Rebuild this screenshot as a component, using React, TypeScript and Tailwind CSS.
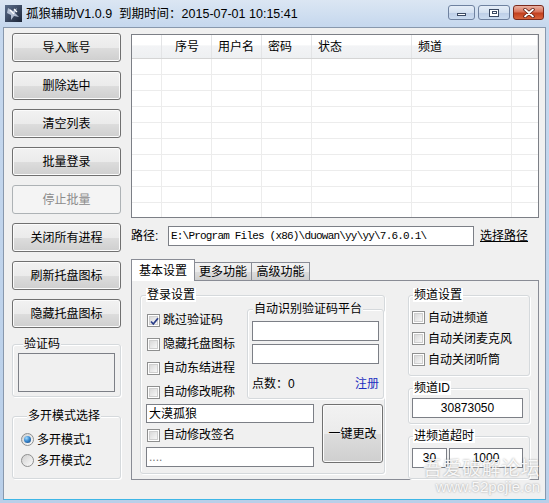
import type { ReactNode } from 'react';

const UI = "font-['Liberation_Sans','Noto_Sans_CJK_SC',sans-serif]";

function Btn({ children, disabled, className = '' }: { children: ReactNode; disabled?: boolean; className?: string }) {
  return (
    <div
      className={`flex items-center justify-center rounded-[3px] border text-[12px] ${
        disabled
          ? 'border-[#adb2b5] bg-[#f4f4f4] text-[#8b8b8b]'
          : 'border-[#707070] bg-[linear-gradient(to_bottom,#f2f2f2_0%,#ebebeb_50%,#dddddd_51%,#cfcfcf_100%)] text-black shadow-[inset_0_0_0_1px_#fbfbfb]'
      } ${className}`}
    >
      {children}
    </div>
  );
}

function Check({ checked, label }: { checked?: boolean; label: string }) {
  return (
    <div className="flex items-center gap-[3px]">
      <span className="relative flex h-[13px] w-[13px] shrink-0 items-center justify-center border border-[#8e8f8f] bg-white">
        <span className="h-[9px] w-[9px] border border-[#cfcfcf] bg-[linear-gradient(135deg,#d9d9d9,#f7f7f7)]" />
        {checked && (
          <svg className="absolute left-[1px] top-[1px]" width="11" height="11" viewBox="0 0 11 11">
            <path d="M2 5.5 L4.3 8 L9 2.3" fill="none" stroke="#2c3f8a" strokeWidth="1.8" />
          </svg>
        )}
      </span>
      <span className="text-[12px] leading-[14px]">{label}</span>
    </div>
  );
}

function Radio({ checked, label }: { checked?: boolean; label: string }) {
  return (
    <div className="flex items-center gap-[3px]">
      <span className="flex h-[13px] w-[13px] shrink-0 items-center justify-center rounded-full border border-[#8e8f8f] bg-[linear-gradient(135deg,#d0d0d0,#fbfbfb)]">
        {checked && (
          <span className="h-[7px] w-[7px] rounded-full bg-[radial-gradient(circle_at_35%_30%,#a5dcff_0%,#3a8ad0_45%,#123f7a_100%)]" />
        )}
      </span>
      <span className="text-[12px] leading-[14px]">{label}</span>
    </div>
  );
}

function Group({
  title,
  white,
  className = '',
  legendClass = 'ml-[5px]',
  children,
}: {
  title: string;
  white?: boolean;
  className?: string;
  legendClass?: string;
  children: ReactNode;
}) {
  return (
    <fieldset className={`rounded-[3px] border border-[#d5d9dc] shadow-[inset_1px_1px_0_#ffffff,1px_1px_0_#ffffff] ${className}`}>
      <legend className={`px-[1px] text-[12px] leading-[14px] ${white ? 'bg-white' : 'bg-[#f0f0f0]'} ${legendClass}`}>
        {title}
      </legend>
      {children}
    </fieldset>
  );
}

function TextBox({ value, className = '', mono, center }: { value?: string; className?: string; mono?: boolean; center?: boolean }) {
  return (
    <div
      className={`flex items-center border border-[#7c7f86] bg-white px-[2px] ${
        mono ? "font-['Liberation_Mono',monospace] text-[11px] tracking-[-0.8px]" : 'text-[12px]'
      } ${center ? 'justify-center' : ''} ${className}`}
    >
      <span className="whitespace-nowrap">{value}</span>
    </div>
  );
}

function TitleButtons() {
  return (
    <div className="flex items-start gap-[3px] pt-[5px]">
      <div className="flex h-[15px] w-[27px] items-center justify-center rounded-[3px] border border-[#6f82a0] bg-[linear-gradient(to_bottom,#e6eef8_0%,#d3e0f0_50%,#bccde6_51%,#cbdcf0_100%)]">
        <span className="mt-[4px] h-[3px] w-[9px] border border-[#3b4a63] bg-white" />
      </div>
      <div className="flex h-[15px] w-[32px] items-center justify-center rounded-[3px] border border-[#6f82a0] bg-[linear-gradient(to_bottom,#e6eef8_0%,#d3e0f0_50%,#bccde6_51%,#cbdcf0_100%)]">
        <span className="flex h-[8px] w-[10px] items-center justify-center border border-[#3b4a63] bg-white">
          <span className="h-[3px] w-[5px] border border-[#3b4a63]" />
        </span>
      </div>
      <div className="flex h-[15px] w-[31px] items-center justify-center rounded-[3px] border border-[#7a2a1d] bg-[linear-gradient(to_bottom,#eab3a4_0%,#d9735a_45%,#c2401f_55%,#d9643c_100%)]">
        <svg width="12" height="10" viewBox="0 0 12 10">
          <path d="M2 1.5 L10 8.5 M10 1.5 L2 8.5" stroke="#5a1a10" strokeWidth="3.4" strokeLinecap="round" />
          <path d="M2 1.5 L10 8.5 M10 1.5 L2 8.5" stroke="#ffffff" strokeWidth="1.8" strokeLinecap="round" />
        </svg>
      </div>
    </div>
  );
}

const cols = [
  { w: 'w-[30px]', t: '', pl: '' },
  { w: 'w-[50px]', t: '序号', pl: 'pl-[13px]' },
  { w: 'w-[50px]', t: '用户名', pl: 'pl-[6px]' },
  { w: 'w-[50px]', t: '密码', pl: 'pl-[6px]' },
  { w: 'w-[100px]', t: '状态', pl: 'pl-[6px]' },
  { w: 'w-[100px]', t: '频道', pl: 'pl-[6px]' },
];

function ListView() {
  return (
    <div className="flex h-[184px] flex-col overflow-hidden border border-[#7c7f86] bg-white">
      <div className="flex h-[24px] shrink-0 border-b border-[#d5d5d5] bg-[linear-gradient(to_bottom,#ffffff_0%,#ffffff_45%,#f3f4f6_46%,#eef0f2_100%)]">
        {cols.map((c, i) => (
          <div key={i} className={`flex items-center border-r border-[#e3e4e6] text-[12px] ${c.w} ${c.pl}`}>
            {c.t}
          </div>
        ))}
        <div className="flex-1 border-r border-[#e3e4e6]" />
      </div>
      {Array.from({ length: 10 }).map((_, r) => (
        <div key={r} className="flex h-[16px] shrink-0 border-b border-[#ececec]">
          {cols.map((c, i) => (
            <div key={i} className={`border-r border-[#ececec] ${c.w}`} />
          ))}
          <div className="flex-1" />
        </div>
      ))}
    </div>
  );
}

export default function App() {
  return (
    <div className={`relative flex h-[503px] w-[549px] flex-col overflow-hidden bg-[linear-gradient(to_bottom,#dbe6f3_0px,#c6d8ee_26px,#b9cfe9_100%)] px-[3px] pb-[3px] text-black ${UI}`}>
      {/* title bar */}
      <div className="flex h-[27px] shrink-0 items-start justify-between pr-[2px]">
        <div className="flex items-center gap-[4px] pl-[2px] pt-[5px]">
          <svg width="17" height="17" viewBox="0 0 17 17">
            <defs>
              <linearGradient id="ic" x1="0" y1="0" x2="1" y2="1">
                <stop offset="0" stopColor="#5b6e8c" />
                <stop offset="1" stopColor="#1c2538" />
              </linearGradient>
            </defs>
            <rect x="0" y="0" width="17" height="17" fill="url(#ic)" />
            <path d="M3 3 L8 6 L12 3 L10 8 L14 12 L9 11 L6 15 L6 10 L2 8 Z" fill="#c9d4e6" opacity="0.85" />
            <path d="M5 5 L9 9 M9 4 L12 7" stroke="#ffffff" strokeWidth="1.2" />
          </svg>
          <span className="text-[12.5px] leading-[16px] text-black">孤狼辅助V1.0.9&nbsp;&nbsp;到期时间：2015-07-01 10:15:41</span>
        </div>
        <TitleButtons />
      </div>

      {/* client area */}
      <div className="flex min-h-0 flex-1 border border-[#8898ad] border-b-[#3fb6e6] bg-[#f0f0f0]">
        {/* left column */}
        <div className="flex w-[117px] shrink-0 flex-col pl-[8px] pt-[5px]">
          <div className="flex flex-col gap-[9px]">
            <Btn className="h-[29px]">导入账号</Btn>
            <Btn className="h-[29px]">删除选中</Btn>
            <Btn className="h-[29px]">清空列表</Btn>
            <Btn className="h-[29px]">批量登录</Btn>
            <Btn className="h-[29px]" disabled>停止批量</Btn>
            <Btn className="h-[29px]">关闭所有进程</Btn>
            <Btn className="h-[29px]">刷新托盘图标</Btn>
            <Btn className="h-[29px]">隐藏托盘图标</Btn>
          </div>
          <Group title="验证码" className="mt-[9px] h-[60px] px-[5px]" legendClass="ml-[5px]">
            <div className="mt-[2px] h-[39px] border border-[#7c7f86] bg-[#f0f0f0]" />
          </Group>
          <Group title="多开模式选择" className="mt-[12px] h-[70px] pl-[8px] pt-[6px]" legendClass="ml-[6px]">
            <div className="flex h-[21px] items-center">
              <Radio checked label="多开模式1" />
            </div>
            <div className="flex h-[21px] items-center">
              <Radio label="多开模式2" />
            </div>
          </Group>
        </div>

        {/* right column */}
        <div className="ml-[10px] flex w-[408px] shrink-0 flex-col pt-[6px]">
          <ListView />

          <div className="mt-[8px] flex h-[20px] items-center">
            <span className="w-[37px] text-[12px]">路径:</span>
            <TextBox mono value="E:\Program Files (x86)\duowan\yy\yy\7.6.0.1\" className="h-[20px] w-[306px]" />
            <span className="ml-[6px] text-[12px] underline">选择路径</span>
          </div>

          {/* tabs */}
          <div className="mt-[13px] flex h-[21px] items-end">
            <div className="relative z-10 -mb-px flex h-[22px] w-[64px] items-center justify-center border border-b-0 border-[#898c95] bg-white text-[12px]">
              基本设置
            </div>
            <div className="flex h-[18px] w-[57px] items-center justify-center border border-l-0 border-b-0 border-[#898c95] bg-[linear-gradient(to_bottom,#f2f2f2_0%,#ebebeb_50%,#dddddd_51%,#cfcfcf_100%)] text-[12px]">
              更多功能
            </div>
            <div className="flex h-[18px] w-[58px] items-center justify-center border border-l-0 border-b-0 border-[#898c95] bg-[linear-gradient(to_bottom,#f2f2f2_0%,#ebebeb_50%,#dddddd_51%,#cfcfcf_100%)] text-[12px]">
              高级功能
            </div>
          </div>
          <div className="flex h-[200px] border border-[#898c95] bg-[#f0f0f0] pl-[8px] pt-[7px]">
            {/* login settings */}
            <Group title="登录设置" white className="h-[186px] w-[245px]" legendClass="ml-[5px]">
              <div className="flex">
                <div className="flex w-[106px] flex-col pl-[6px] pt-[6px]">
                  <div className="flex h-[24px] items-center"><Check checked label="跳过验证码" /></div>
                  <div className="flex h-[24px] items-center"><Check label="隐藏托盘图标" /></div>
                  <div className="flex h-[24px] items-center"><Check label="自动东结进程" /></div>
                  <div className="flex h-[24px] items-center"><Check label="自动修改昵称" /></div>
                </div>
                <Group title="自动识别验证码平台" className="h-[97px] w-[137px] pl-[4px]" legendClass="ml-[1px]">
                  <TextBox className="mt-[5px] h-[20px] w-[127px]" />
                  <TextBox className="mt-[3px] h-[20px] w-[127px]" />
                  <div className="mt-[10px] flex h-[20px] w-[127px] items-center justify-between text-[12px]">
                    <span>点数：0</span>
                    <span className="text-[#1d2fc0]">注册</span>
                  </div>
                </Group>
              </div>
              <div className="flex pl-[5px]">
                <div className="flex w-[168px] flex-col">
                  <TextBox value="大漠孤狼" className="h-[19px] w-[168px]" />
                  <div className="flex h-[24px] items-center pl-[1px]"><Check label="自动修改签名" /></div>
                  <TextBox value="...." className="h-[20px] w-[168px] text-[#777]" />
                </div>
                <Btn className="ml-[8px] h-[59px] w-[61px]">一键更改</Btn>
              </div>
            </Group>

            {/* right groups */}
            <div className="ml-[23px] flex w-[122px] flex-col">
              <Group title="频道设置" white className="h-[88px] pl-[3px] pt-[5px]" legendClass="ml-[1px]">
                <div className="flex h-[21px] items-center"><Check label="自动进频道" /></div>
                <div className="flex h-[21px] items-center"><Check label="自动关闭麦克风" /></div>
                <div className="flex h-[21px] items-center"><Check label="自动关闭听筒" /></div>
              </Group>
              <Group title="频道ID" white className="mt-[5px] h-[43px] pl-[3px]" legendClass="ml-[1px]">
                <TextBox center value="30873050" className="mt-[3px] h-[20px] w-[111px]" />
              </Group>
              <Group title="进频道超时" white className="mt-[5px] h-[50px] pl-[3px]" legendClass="ml-[1px]">
                <div className="mt-[5px] flex gap-[2px]">
                  <TextBox center value="30" className="h-[20px] w-[35px]" />
                  <TextBox center value="1000" className="h-[20px] w-[74px]" />
                </div>
              </Group>
            </div>
          </div>
        </div>
      </div>

      {/* forum watermark */}
      <div className="pointer-events-none absolute bottom-[8px] right-[9px] flex flex-col items-end text-white/90 [text-shadow:0_0_2px_rgba(0,0,0,0.4)]">
        <span className="text-[19px] leading-[21px] tracking-[0.5px]">吾爱破解论坛</span>
        <span className="font-['Liberation_Sans',sans-serif] text-[15px] leading-[16px]">www.52pojie.cn</span>
      </div>
    </div>
  );
}
